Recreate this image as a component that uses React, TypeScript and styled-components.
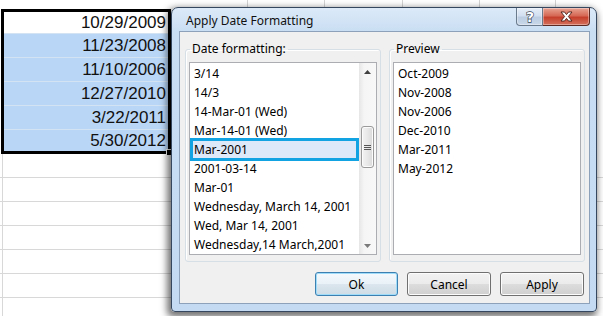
import styled, { createGlobalStyle } from "styled-components";

const GlobalStyle = createGlobalStyle`
	body {
		margin: 0;
		background: #ffffff;
		overflow: hidden;
	}
`;

const Page = styled.div`
	position: relative;
	width: 603px;
	height: 316px;
	overflow: hidden;
	background: #ffffff;
`;

// spreadsheet behind the dialog
const Sheet = styled.div`
	display: flex;
	flex-direction: column;
`;

const TopStrip = styled.div`
	display: grid;
	grid-template-columns: 248px 77px 78px 77px 76px 1fr;
	height: 9px;
`;

const StripCell = styled.div`
	border-right: 1px solid #d4d4d4;
`;

const Selection = styled.div`
	position: relative;
	box-sizing: border-box;
	width: 170px;
	margin-left: 1px;
	border: 3px solid #000000;
	display: grid;
	grid-template-rows: 21px repeat(4, 24px) 22px;
`;

const Cell = styled.div<{ $active?: boolean }>`
	display: flex;
	align-items: center;
	justify-content: flex-end;
	padding-right: 2px;
	background: ${(p) => (p.$active ? "#ffffff" : "#b9d6f6")};
	border-top: ${(p) => (p.$active ? "none" : "1px solid #d3e3f3")};
	font-family: "Liberation Sans", Arial, sans-serif;
	font-size: 17px;
	color: #111111;
`;

const FillHandle = styled.div`
	position: absolute;
	right: -5px;
	bottom: -5px;
	width: 5px;
	height: 5px;
	background: #000000;
	border: 1px solid #ffffff;
`;

const EmptyRow = styled.div`
	box-sizing: border-box;
	height: 24px;
	border-bottom: 1px solid #d8d8d8;
	display: flex;
`;

const EmptyCell = styled.div`
	width: 168px;
	margin-left: 2px;
	border-left: 1px solid #d8d8d8;
`;

// dialog window
const Dialog = styled.div`
	position: absolute;
	left: 171px;
	top: 7px;
	width: 426px;
	height: 305px;
	box-sizing: border-box;
	border: 1px solid #34475e;
	border-radius: 7px 7px 4px 4px;
	padding: 0 6px 7px 7px;
	display: flex;
	flex-direction: column;
	background: linear-gradient(
		to bottom,
		#dceaf8 0px,
		#c9def3 24px,
		#c3daf2 100%
	);
	box-shadow: -2px 3px 7px 2px rgba(0, 0, 0, 0.55);
	font-family: "Noto Sans", "Segoe UI", sans-serif;
`;

const TitleBar = styled.div`
	height: 23px;
	display: flex;
	align-items: flex-start;
`;

const Title = styled.div`
	flex: 1;
	padding-left: 7px;
	margin-top: 5px;
	font-size: 12px;
	line-height: 16px;
	color: #111111;
`;

const CaptionButtons = styled.div`
	display: flex;
`;

const CaptionButton = styled.div<{ $close?: boolean }>`
	box-sizing: border-box;
	width: ${(p) => (p.$close ? "47px" : "27px")};
	height: 18px;
	display: flex;
	align-items: center;
	justify-content: center;
	border: 1px solid ${(p) => (p.$close ? "#5c2a22" : "#6b7b8e")};
	border-top: none;
	border-left: ${(p) => (p.$close ? "none" : undefined)};
	border-radius: ${(p) => (p.$close ? "0 0 4px 0" : "0 0 0 4px")};
	background: ${(p) =>
		p.$close
			? "linear-gradient(to bottom, #e8a393 0%, #d66a56 45%, #c5402c 55%, #d4715d 100%)"
			: "linear-gradient(to bottom, #e6eef8 0%, #d2dff0 45%, #bccde2 55%, #c9d8ea 100%)"};
	box-shadow: inset 0 0 0 1px rgba(255, 255, 255, 0.35);
`;

const Content = styled.div`
	flex: 1;
	display: flex;
	flex-direction: column;
	background: #f0f0f0;
	border: 1px solid #8da2ba;
	padding: 10px 4px 7px 5px;
`;

const Groups = styled.div`
	display: flex;
	gap: 8px;
`;

const Group = styled.fieldset`
	box-sizing: border-box;
	width: 196px;
	height: 220px;
	margin: 0;
	padding: 6px 3px 6px 3px;
	border: 1px solid #d5dfe5;
	border-radius: 3px;
	min-width: 0;
	box-shadow: inset 1px 1px 0 #ffffff;
`;

const Legend = styled.legend`
	padding: 0 2px;
	margin-left: 1px;
	font-size: 12px;
	line-height: 14px;
	color: #000000;
`;

const ListBox = styled.div`
	box-sizing: border-box;
	height: 193px;
	border: 1px solid #abadb3;
	background: #ffffff;
	display: flex;
`;

const Items = styled.div`
	flex: 1;
	padding-top: 1px;
	overflow: hidden;
`;

const Item = styled.div<{ $selected?: boolean }>`
	box-sizing: border-box;
	height: 19px;
	line-height: 19px;
	padding-left: 4px;
	font-size: 12px;
	color: #000000;
	white-space: nowrap;
	${(p) =>
		p.$selected &&
		`
		background: #dde8f8;
		outline: 3px solid #12a3e3;
		outline-offset: -2px;
		margin: -1px 1px;
		padding-left: 3px;
		height: 21px;
		line-height: 21px;
	`}
`;

const ScrollBar = styled.div`
	width: 17px;
	display: flex;
	flex-direction: column;
	background: linear-gradient(to right, #e6e6e6, #f5f5f5 30%, #f8f8f8);
`;

const Arrow = styled.div`
	height: 17px;
	display: flex;
	align-items: center;
	justify-content: center;
`;

const Thumb = styled.div`
	box-sizing: border-box;
	margin: 46px 2px 0 2px;
	height: 42px;
	border: 1px solid #9a9a9a;
	border-radius: 3px;
	background: linear-gradient(to right, #f3f3f3, #e8e8e8 50%, #d9d9d9);
	display: flex;
	align-items: center;
	justify-content: center;
	box-shadow: inset 0 0 0 1px #fbfbfb;
`;

const Spacer = styled.div`
	flex: 1;
`;

const ButtonRow = styled.div`
	display: flex;
	justify-content: flex-end;
	gap: 9px;
	margin-top: 10px;
	margin-right: 1px;
`;

const Button = styled.button<{ $default?: boolean }>`
	box-sizing: border-box;
	width: ${(p) => (p.$default ? "83px" : "84px")};
	height: 24px;
	padding: 0;
	font-family: "Noto Sans", "Segoe UI", sans-serif;
	font-size: 12px;
	color: #000000;
	border: 1px solid ${(p) => (p.$default ? "#3c7fb1" : "#707070")};
	border-radius: 3px;
	background: ${(p) =>
		p.$default
			? "linear-gradient(to bottom, #f4f9fc 0%, #e9f2f8 50%, #dbe6ee 50%, #cfdce6 100%)"
			: "linear-gradient(to bottom, #f2f2f2 0%, #ebebeb 50%, #dddddd 50%, #cfcfcf 100%)"};
	box-shadow: inset 0 0 0 1px ${(p) => (p.$default ? "#9fdcf9" : "#fcfcfc")};
`;

const cells = [
	"10/29/2009",
	"11/23/2008",
	"11/10/2006",
	"12/27/2010",
	"3/22/2011",
	"5/30/2012",
];

const formats = [
	"3/14",
	"14/3",
	"14-Mar-01 (Wed)",
	"Mar-14-01 (Wed)",
	"Mar-2001",
	"2001-03-14",
	"Mar-01",
	"Wednesday, March 14, 2001",
	"Wed, Mar 14, 2001",
	"Wednesday,14 March,2001",
];

const preview = [
	"Oct-2009",
	"Nov-2008",
	"Nov-2006",
	"Dec-2010",
	"Mar-2011",
	"May-2012",
];

const HelpGlyph = () => (
	<svg width="12" height="16" viewBox="0 0 12 16" style={{ overflow: "visible" }}>
		<text
			x="6"
			y="13"
			textAnchor="middle"
			fontFamily="DejaVu Sans, sans-serif"
			fontWeight="bold"
			fontSize="14"
			fill="#ffffff"
			stroke="#3a4656"
			strokeWidth="1.3"
			paintOrder="stroke"
		>
			?
		</text>
	</svg>
);

const CloseGlyph = () => (
	<svg width="15" height="11" viewBox="0 0 15 11">
		<path
			d="M2 1 H5.5 L7.5 3.6 L9.5 1 H13 L9.4 5.5 L13 10 H9.5 L7.5 7.4 L5.5 10 H2 L5.6 5.5 Z"
			fill="#ffffff"
			stroke="#4a1d16"
			strokeWidth="0.9"
			strokeLinejoin="round"
		/>
	</svg>
);

const UpArrow = () => (
	<svg width="7" height="4" viewBox="0 0 7 4">
		<path d="M0 4 L3.5 0 L7 4 Z" fill="#3f3f3f" />
	</svg>
);

const DownArrow = () => (
	<svg width="7" height="4" viewBox="0 0 7 4">
		<path d="M0 0 L3.5 4 L7 0 Z" fill="#7a7a7a" />
	</svg>
);

const Grip = () => (
	<svg width="7" height="7" viewBox="0 0 7 7">
		<path d="M0 1.5 H7 M0 3.5 H7 M0 5.5 H7" stroke="#555555" strokeWidth="1" />
	</svg>
);

const App = () => {
	return (
		<Page>
			<GlobalStyle />
			<Sheet>
				<TopStrip>
					<StripCell />
					<StripCell />
					<StripCell />
					<StripCell />
					<StripCell />
					<div />
				</TopStrip>
				<Selection>
					{cells.map((c, i) => (
						<Cell key={c} $active={i === 0}>
							{c}
						</Cell>
					))}
					<FillHandle />
				</Selection>
				{Array.from({ length: 7 }).map((_, i) => (
					<EmptyRow key={i}>
						<EmptyCell />
					</EmptyRow>
				))}
			</Sheet>

			<Dialog>
				<TitleBar>
					<Title>Apply Date Formatting</Title>
					<CaptionButtons>
						<CaptionButton>
							<HelpGlyph />
						</CaptionButton>
						<CaptionButton $close>
							<CloseGlyph />
						</CaptionButton>
					</CaptionButtons>
				</TitleBar>
				<Content>
					<Groups>
						<Group>
							<Legend>Date formatting:</Legend>
							<ListBox>
								<Items>
									{formats.map((f) => (
										<Item key={f} $selected={f === "Mar-2001"}>
											{f}
										</Item>
									))}
								</Items>
								<ScrollBar>
									<Arrow>
										<UpArrow />
									</Arrow>
									<Thumb>
										<Grip />
									</Thumb>
									<Spacer />
									<Arrow>
										<DownArrow />
									</Arrow>
								</ScrollBar>
							</ListBox>
						</Group>
						<Group>
							<Legend>Preview</Legend>
							<ListBox>
								<Items>
									{preview.map((p) => (
										<Item key={p}>{p}</Item>
									))}
								</Items>
							</ListBox>
						</Group>
					</Groups>
					<ButtonRow>
						<Button $default>Ok</Button>
						<Button>Cancel</Button>
						<Button>Apply</Button>
					</ButtonRow>
				</Content>
			</Dialog>
		</Page>
	);
};

export default App;
